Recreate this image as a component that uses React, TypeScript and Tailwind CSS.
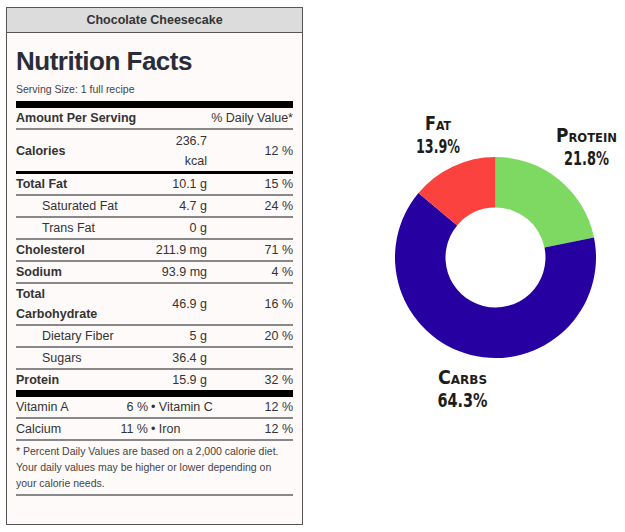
type Nutrient = {
  name: string
  amount: string
  pct?: string
  bold?: boolean
  indent?: boolean
  tall?: boolean
}

const nutrients: Nutrient[] = [
  { name: "Total Fat", amount: "10.1 g", pct: "15 %", bold: true },
  { name: "Saturated Fat", amount: "4.7 g", pct: "24 %", indent: true },
  { name: "Trans Fat", amount: "0 g", indent: true },
  { name: "Cholesterol", amount: "211.9 mg", pct: "71 %", bold: true },
  { name: "Sodium", amount: "93.9 mg", pct: "4 %", bold: true },
  { name: "Total Carbohydrate", amount: "46.9 g", pct: "16 %", bold: true, tall: true },
  { name: "Dietary Fiber", amount: "5 g", pct: "20 %", indent: true },
  { name: "Sugars", amount: "36.4 g", indent: true },
]

const vitamins = [
  { a: "Vitamin A", av: "6 %", b: "Vitamin C", bv: "12 %" },
  { a: "Calcium", av: "11 %", b: "Iron", bv: "12 %" },
]

function NutrientRow({ n }: { n: Nutrient }) {
  return (
    <div
      className={`grid grid-cols-[108px_83px_86px] items-center border-b-2 border-[#888] leading-[20px] ${
        n.tall ? "h-[42px]" : "h-[22px]"
      }`}
    >
      <span className={`${n.bold ? "font-bold" : ""} ${n.indent ? "pl-[26px]" : ""}`}>{n.name}</span>
      <span className="text-right">{n.amount}</span>
      <span className="text-right">{n.pct}</span>
    </div>
  )
}

function NutritionLabel() {
  return (
    <div className="ml-[6px] mt-[7px] w-[297px] shrink-0 border border-[#555] bg-[#fffafa] text-[12.5px] text-[#333]">
      <div className="flex h-[25px] items-center justify-center border-b border-[#555] bg-[#dcdcdc] font-bold">
        Chocolate Cheesecake
      </div>
      <div className="px-[9px] pb-[28px]">
        <h1 className="pt-[13px] text-[26px] font-bold leading-[30px] tracking-[-0.5px] text-[#2a2d39]">
          Nutrition Facts
        </h1>
        <div className="mt-[5px] text-[10.5px] leading-[16px] text-[#444]">Serving Size: 1 full recipe</div>
        <div className="mt-[4px] h-[7px] bg-black" />
        <div className="flex h-[22px] items-center justify-between border-b-2 border-[#888]">
          <span className="font-bold">Amount Per Serving</span>
          <span>% Daily Value*</span>
        </div>
        <div className="grid h-[41px] grid-cols-[108px_83px_86px] items-center leading-[20px]">
          <span className="font-bold">Calories</span>
          <span className="text-right">
            236.7
            <br />
            kcal
          </span>
          <span className="text-right">12 %</span>
        </div>
        <div className="h-[3px] bg-black" />
        {nutrients.map((n) => (
          <NutrientRow key={n.name} n={n} />
        ))}
        <div className="grid h-[20px] grid-cols-[108px_83px_86px] items-center leading-[20px]">
          <span className="font-bold">Protein</span>
          <span className="text-right">15.9 g</span>
          <span className="text-right">32 %</span>
        </div>
        <div className="h-[7px] bg-black" />
        {vitamins.map((v) => (
          <div
            key={v.a}
            className="grid h-[22px] grid-cols-[90px_42px_1fr_60px] items-center border-b-2 border-[#888] leading-[20px]"
          >
            <span>{v.a}</span>
            <span className="text-right">{v.av}</span>
            <span className="pl-[3px]">• {v.b}</span>
            <span className="text-right">{v.bv}</span>
          </div>
        ))}
        <p className="border-b-2 border-[#888] pb-[3px] pt-[2px] text-[10.5px] leading-[16px] text-[#444]">
          * Percent Daily Values are based on a 2,000 calorie diet. Your daily values may be higher or lower depending
          on your calorie needs.
        </p>
      </div>
    </div>
  )
}

const slices = [
  { label: "Protein", pct: 21.8, color: "#7ed962" },
  { label: "Carbs", pct: 64.3, color: "#2600a1" },
  { label: "Fat", pct: 13.9, color: "#fb423f" },
]

function arc(cx: number, cy: number, R: number, r: number, a0: number, a1: number) {
  const rad = (d: number) => (d * Math.PI) / 180
  const p = (a: number, rr: number) => `${cx + rr * Math.cos(rad(a))} ${cy + rr * Math.sin(rad(a))}`
  const large = a1 - a0 > 180 ? 1 : 0
  return `M ${p(a0, R)} A ${R} ${R} 0 ${large} 1 ${p(a1, R)} L ${p(a1, r)} A ${r} ${r} 0 ${large} 0 ${p(a0, r)} Z`
}

function MacroChart() {
  let start = -90
  const labelFont = "'Liberation Sans Narrow', 'DejaVu Sans Condensed', 'Liberation Sans', sans-serif"
  const labels = [
    { name: "Fat", value: "13.9%", x: 135, y1: 130, y2: 153, w1: 26, w2: 44 },
    { name: "Protein", value: "21.8%", x: 283.5, y1: 142, y2: 165, w1: 61, w2: 45 },
    { name: "Carbs", value: "64.3%", x: 159.5, y1: 384, y2: 407, w1: 49, w2: 50 },
  ]
  return (
    <svg width="322" height="532" viewBox="0 0 322 532" className="shrink-0">
      {slices.map((s) => {
        const end = start + (s.pct / 100) * 360
        const d = arc(192.5, 257.5, 100.5, 50, start, end)
        start = end
        return <path key={s.label} d={d} fill={s.color} />
      })}
      {labels.map((l) => (
        <g key={l.name} fill="#1c1c1c" fontFamily={labelFont} fontWeight="bold" fontSize="19" textAnchor="middle">
          <text
            x={l.x}
            y={l.y1}
            textLength={l.w1}
            lengthAdjust="spacingAndGlyphs"
            style={{ fontVariant: "small-caps" }}
          >
            {l.name}
          </text>
          <text x={l.x} y={l.y2} textLength={l.w2} lengthAdjust="spacingAndGlyphs">
            {l.value}
          </text>
        </g>
      ))}
    </svg>
  )
}

export default function App() {
  return (
    <div className="flex h-[532px] w-[625px] items-start bg-white font-['Liberation_Sans',Arial,sans-serif]">
      <NutritionLabel />
      <MacroChart />
    </div>
  )
}
